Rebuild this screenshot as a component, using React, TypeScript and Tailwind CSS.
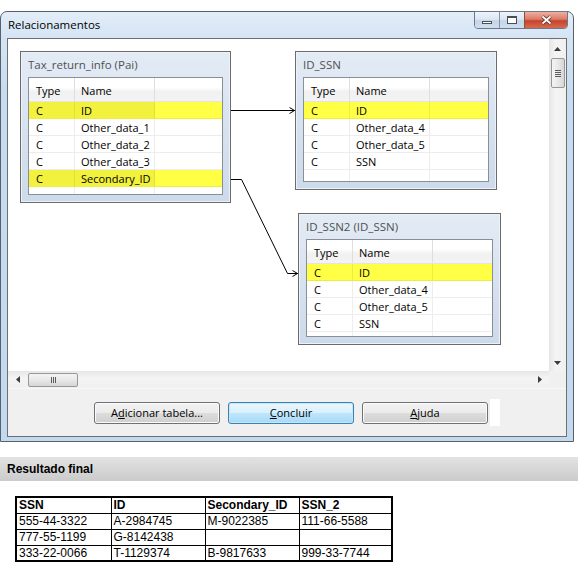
import React from "react";

const ui: React.CSSProperties = { fontFamily: '"Open Sans", "Noto Sans", sans-serif' };
const arial: React.CSSProperties = { fontFamily: '"Liberation Sans", Arial, sans-serif' };

type Row = { name: string; hl?: boolean };

function Entity({
  pos,
  title,
  rows,
  gridH,
  splitHl,
}: {
  pos: string;
  title: string;
  rows: Row[];
  gridH: string;
  splitHl?: boolean;
}) {
  return (
    <div
      className={`absolute ${pos} border border-[#6b6b6b] bg-[linear-gradient(#e3ebf5,#ccdaeb)] px-[7px] pb-[7px] shadow-[inset_0_0_0_1px_#edf2f8]`}
    >
      <div className="h-[25px] pt-[6px] text-[11.5px] leading-[14px] text-[#505050] whitespace-nowrap">
        {title}
      </div>
      <div className={`${gridH} flex flex-col border border-[#8a8f96] bg-white text-[11px] text-black`}>
        <div className="flex h-[24px] shrink-0 border-b border-[#e4e4e4] bg-[linear-gradient(#ffffff_0%,#ffffff_40%,#f1f1f1_60%,#f3f3f3_100%)]">
          <div className="w-[46px] shrink-0 border-r border-[#dedede] pl-[7px] pt-[2px] leading-[22px]">Type</div>
          <div className="w-[80px] shrink-0 border-r border-[#dedede] pl-[6px] pt-[2px] leading-[22px]">Name</div>
          <div className="flex-1" />
        </div>
        {rows.map((r, i) => (
          <div
            key={i}
            className={`flex h-[17px] shrink-0 border-b border-black/[0.07] ${r.hl ? "bg-[#ffff45]" : ""}`}
          >
            <div
              className={`w-[46px] shrink-0 border-r border-black/[0.07] pl-[7px] pt-[1px] leading-[15px] ${
                r.hl && splitHl ? "bg-[#f1f13e]" : ""
              }`}
            >
              C
            </div>
            <div
              className={`w-[80px] shrink-0 border-r border-black/[0.07] pl-[6px] pt-[1px] leading-[15px] whitespace-nowrap ${
                r.hl && splitHl ? "bg-[#f1f13e]" : ""
              }`}
            >
              {r.name}
            </div>
            <div className="flex-1" />
          </div>
        ))}
        <div className="flex flex-1">
          <div className="w-[46px] shrink-0 border-r border-black/[0.07]" />
          <div className="w-[80px] shrink-0 border-r border-black/[0.07]" />
          <div className="flex-1" />
        </div>
      </div>
    </div>
  );
}

function Btn({ children, primary, cls }: { children: React.ReactNode; primary?: boolean; cls: string }) {
  return (
    <div
      className={`${cls} flex h-[22px] w-[126px] shrink-0 items-center justify-center rounded-[3px] border text-[11px] text-black ${
        primary
          ? "border-[#3c7fb1] bg-[linear-gradient(#eaf6fd_0%,#d9f0fc_50%,#bee6fd_50%,#a7d9f5_100%)] shadow-[inset_0_0_0_1px_#c5e7fa]"
          : "border-[#707070] bg-[linear-gradient(#f2f2f2_0%,#ebebeb_50%,#dddddd_50%,#cfcfcf_100%)] shadow-[inset_0_0_0_1px_#fbfbfb]"
      }`}
    >
      {children}
    </div>
  );
}

export default function App() {
  return (
    <div className="relative h-[571px] w-[580px] overflow-hidden bg-white" style={ui}>
      <div className="h-[11px]" />
      {/* Window */}
      <div className="relative flex h-[431px] w-[574px] flex-col rounded-t-[7px] border border-[#56616c] bg-[linear-gradient(#e2edf8_0px,#d5e4f4_26px,#c7dcf1_80px,#c3d9ef_100%)]">
        {/* title bar */}
        <div className="flex h-[26px] shrink-0 items-center pl-[7px] text-[11.5px] text-black">Relacionamentos</div>
        {/* caption buttons */}
        <div className="absolute right-[5px] top-[-1px] flex h-[18px] overflow-hidden rounded-b-[4px] border border-[#6d7888]">
          <div className="flex w-[25px] items-end justify-center border-r border-[#8593a4] bg-[linear-gradient(#eef4fb_0%,#dce7f3_45%,#c5d5e8_55%,#cfdeef_100%)] pb-[4px]">
            <div className="h-[3px] w-[10px] border border-[#4a4f57] bg-white" />
          </div>
          <div className="flex w-[25px] items-center justify-center border-r border-[#8b4b43] bg-[linear-gradient(#eef4fb_0%,#dce7f3_45%,#c5d5e8_55%,#cfdeef_100%)]">
            <div className="h-[8px] w-[10px] border border-t-2 border-[#4a4f57] bg-white" />
          </div>
          <div className="flex w-[42px] items-center justify-center bg-[linear-gradient(#eeb0a2_0%,#dc7a66_45%,#c6432d_55%,#d66a4f_100%)]">
            <svg width="13" height="10" viewBox="0 0 13 10">
              <path d="M2.5 1.5 L10.5 8.5 M10.5 1.5 L2.5 8.5" stroke="#5a2a22" strokeWidth="3.4" />
              <path d="M2.5 1.5 L10.5 8.5 M10.5 1.5 L2.5 8.5" stroke="#ffffff" strokeWidth="1.8" />
            </svg>
          </div>
        </div>

        {/* client area */}
        <div className="mx-[6px] flex h-[399px] w-[560px] shrink-0 flex-col border border-[#6f6f6f] bg-[#f0f0f0]">
          <div className="flex h-[332px] shrink-0">
            {/* canvas */}
            <div className="relative w-[541px] shrink-0 bg-white">
              <Entity
                pos="left-[12px] top-[12px] w-[211px]"
                title="Tax_return_info (Pai)"
                gridH="h-[118px]"
                splitHl
                rows={[
                  { name: "ID", hl: true },
                  { name: "Other_data_1" },
                  { name: "Other_data_2" },
                  { name: "Other_data_3" },
                  { name: "Secondary_ID", hl: true },
                ]}
              />
              <Entity
                pos="left-[287px] top-[12px] w-[202px]"
                title="ID_SSN"
                gridH="h-[105px]"
                rows={[{ name: "ID", hl: true }, { name: "Other_data_4" }, { name: "Other_data_5" }, { name: "SSN" }]}
              />
              <Entity
                pos="left-[290px] top-[174px] w-[203px]"
                title="ID_SSN2 (ID_SSN)"
                gridH="h-[98px]"
                rows={[{ name: "ID", hl: true }, { name: "Other_data_4" }, { name: "Other_data_5" }, { name: "SSN" }]}
              />
              <svg className="pointer-events-none absolute inset-0" width="541" height="332">
                <path d="M223 71.5 H287" stroke="#000" strokeWidth="1" fill="none" shapeRendering="crispEdges" />
                <path d="M281.5 68.5 L286.5 71.5 L281.5 74.5" stroke="#000" strokeWidth="1" fill="none" />
                <path d="M223 140.5 H233.5 L279.5 234.5 H290" stroke="#000" strokeWidth="1" fill="none" />
                <path d="M284.5 231.5 L289.5 234.5 L284.5 237.5" stroke="#000" strokeWidth="1" fill="none" />
              </svg>
            </div>
            {/* vertical scrollbar */}
            <div className="relative flex w-[17px] shrink-0 flex-col items-center bg-[linear-gradient(90deg,#e6e6e6,#f4f4f4_40%,#f0f0f0)]">
              <svg className="mt-[8px]" width="7" height="4" viewBox="0 0 7 4">
                <path d="M0 4 L3.5 0 L7 4 Z" fill="#3c3c3c" />
              </svg>
              <div className="mt-[7px] flex h-[30px] w-[14px] flex-col items-center justify-center gap-[1px] rounded-[2px] border border-[#979797] bg-[linear-gradient(90deg,#f4f4f4,#e8e8e8_50%,#d6d6d6)]">
                <div className="h-px w-[6px] bg-[#5c5c5c]" />
                <div className="h-px w-[6px] bg-[#5c5c5c]" />
                <div className="h-px w-[6px] bg-[#5c5c5c]" />
                <div className="h-px w-[6px] bg-[#5c5c5c]" />
              </div>
              <div className="flex-1" />
              <svg className="mb-[6px]" width="7" height="4" viewBox="0 0 7 4">
                <path d="M0 0 L3.5 4 L7 0 Z" fill="#3c3c3c" />
              </svg>
            </div>
          </div>
          {/* horizontal scrollbar */}
          <div className="flex h-[17px] shrink-0">
            <div className="flex w-[541px] shrink-0 items-center bg-[linear-gradient(#e6e6e6,#f4f4f4_40%,#f0f0f0)]">
              <svg className="ml-[8px]" width="4" height="7" viewBox="0 0 4 7">
                <path d="M4 0 L0 3.5 L4 7 Z" fill="#3c3c3c" />
              </svg>
              <div className="ml-[8px] flex h-[14px] w-[50px] items-center justify-center gap-[1px] rounded-[2px] border border-[#979797] bg-[linear-gradient(#f4f4f4,#e8e8e8_50%,#d6d6d6)]">
                <div className="h-[6px] w-px bg-[#5c5c5c]" />
                <div className="h-[6px] w-px bg-[#5c5c5c]" />
                <div className="h-[6px] w-px bg-[#5c5c5c]" />
              </div>
              <div className="flex-1" />
              <svg className="mr-[7px]" width="4" height="7" viewBox="0 0 4 7">
                <path d="M0 0 L4 3.5 L0 7 Z" fill="#3c3c3c" />
              </svg>
            </div>
            <div className="w-[17px] shrink-0 bg-[#f0f0f0]" />
          </div>
          {/* buttons */}
          <div className="flex h-[48px] shrink-0 items-start border-t border-[#f8f8f8] bg-[#f0f0f0] pt-[13px]">
            <Btn cls="ml-[86px]">
              <span>
                A<span className="underline">d</span>icionar tabela...
              </span>
            </Btn>
            <Btn cls="ml-[8px]" primary>
              <span>
                <span className="underline">C</span>oncluir
              </span>
            </Btn>
            <Btn cls="ml-[8px]">
              <span>
                <span className="underline">A</span>juda
              </span>
            </Btn>
            <div className="ml-[2px] mt-[-3px] h-[27px] w-[10px] bg-white" />
          </div>
        </div>
      </div>

      {/* Resultado final */}
      <div style={arial}>
        <div className="mt-[15px] flex h-[24px] w-[578px] items-center bg-[linear-gradient(#e2e2e2,#cbcbcb)] pl-[7px] text-[12px] font-bold text-black">
          Resultado final
        </div>
        <table className="ml-[15px] mt-[15px] border-collapse border-2 border-black text-[12px] leading-[14px] text-black">
          <tbody>
            <tr className="font-bold">
              <td className="h-[16px] w-[95px] border border-black px-[2px] py-0">SSN</td>
              <td className="w-[94px] border border-black px-[2px] py-0">ID</td>
              <td className="w-[94px] border border-black px-[2px] py-0">Secondary_ID</td>
              <td className="w-[93px] border border-black px-[2px] py-0">SSN_2</td>
            </tr>
            <tr>
              <td className="h-[16px] border border-black px-[2px] py-0">555-44-3322</td>
              <td className="border border-black px-[2px] py-0">A-2984745</td>
              <td className="border border-black px-[2px] py-0">M-9022385</td>
              <td className="border border-black px-[2px] py-0">111-66-5588</td>
            </tr>
            <tr>
              <td className="h-[16px] border border-black px-[2px] py-0">777-55-1199</td>
              <td className="border border-black px-[2px] py-0">G-8142438</td>
              <td className="border border-black px-[2px] py-0"></td>
              <td className="border border-black px-[2px] py-0"></td>
            </tr>
            <tr>
              <td className="h-[16px] border border-black px-[2px] py-0">333-22-0066</td>
              <td className="border border-black px-[2px] py-0">T-1129374</td>
              <td className="border border-black px-[2px] py-0">B-9817633</td>
              <td className="border border-black px-[2px] py-0">999-33-7744</td>
            </tr>
          </tbody>
        </table>
      </div>
    </div>
  );
}
